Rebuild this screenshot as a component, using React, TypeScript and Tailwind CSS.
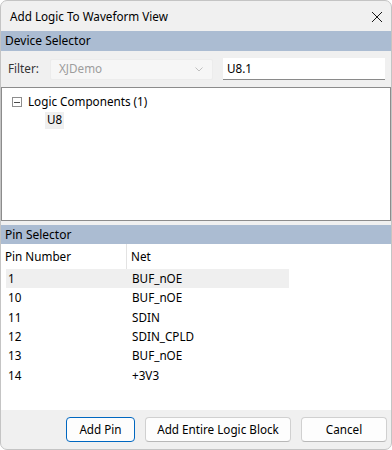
import React from 'react';

const font = { fontFamily: '"Segoe UI", "Noto Sans", "Liberation Sans", sans-serif' };

const pins = [
    { pin: '1', net: 'BUF_nOE' },
    { pin: '10', net: 'BUF_nOE' },
    { pin: '11', net: 'SDIN' },
    { pin: '12', net: 'SDIN_CPLD' },
    { pin: '13', net: 'BUF_nOE' },
    { pin: '14', net: '+3V3' },
];

function Band({ label, h }: { label: string; h: string }) {
    return (
        <div className={`${h} bg-[#abbcd2] flex items-center pl-[4px] text-[12px] text-black leading-none`}>
            {label}
        </div>
    );
}

export default function App() {
    return (
        <div className="w-[392px] h-[450px] bg-white">
            <div
                className="w-[392px] h-[450px] rounded-[7px] border border-[#c4c4c4] bg-[#f0f0f0] overflow-hidden flex flex-col text-[11.7px] text-black"
                style={font}
            >
                {/* title bar */}
                <div className="h-[30px] flex items-center justify-between pl-[9px] pr-[7px] pt-[2px] shrink-0">
                    <span className="leading-none">Add Logic To Waveform View</span>
                    <svg width="12" height="12" viewBox="0 0 12 12" className="mr-[1px]">
                        <path d="M1 1 L11 11 M11 1 L1 11" stroke="#1a1a1a" strokeWidth="1" />
                    </svg>
                </div>

                <Band label="Device Selector" h="h-[20px]" />

                {/* filter row */}
                <div className="h-[36px] flex items-center shrink-0">
                    <span className="ml-[7px] w-[42px] text-[#333]">Filter:</span>
                    <div className="w-[163px] h-[21px] bg-[#f6f6f6] border border-[#ececec] rounded-[2px] flex items-center justify-between pl-[8px] pr-[9px] text-[#9d9d9d]">
                        <span>XJDemo</span>
                        <svg width="8" height="5" viewBox="0 0 8 5">
                            <path d="M0.5 0.5 L4 4 L7.5 0.5" stroke="#c0c0c0" fill="none" strokeWidth="1" />
                        </svg>
                    </div>
                    <div className="ml-[10px] w-[162px] h-[22px] bg-white border-b border-[#8a8a8a] flex items-center pl-[4px]">
                        U8.1
                    </div>
                </div>

                {/* tree view */}
                <div className="h-[134px] bg-white border border-[#8c8c8c] shrink-0 pt-[5px]">
                    <div className="flex items-center h-[18px] pl-[10px]">
                        <span className="w-[10px] h-[10px] border border-[#8e8e8e] flex items-center justify-center">
                            <span className="w-[6px] h-[1px] bg-[#4a4a4a]" />
                        </span>
                        <span className="ml-[6px]">Logic Components (1)</span>
                    </div>
                    <div className="flex items-center h-[18px] pl-[43px]">
                        <span className="bg-[#efefef] px-[2px] h-[17px] flex items-center">U8</span>
                    </div>
                </div>

                <div className="h-[4px] shrink-0" />

                <Band label="Pin Selector" h="h-[19px]" />

                {/* pin table */}
                <div className="flex-1 bg-white flex flex-col">
                    <div className="h-[25px] flex items-stretch shrink-0">
                        <div className="w-[126px] border-r border-[#e3e3e3] flex items-center pl-[4px]">Pin Number</div>
                        <div className="flex items-center pl-[4px]">Net</div>
                    </div>
                    <div className="flex flex-col pl-[5px]">
                        {pins.map((p, i) => (
                            <div
                                key={i}
                                className={`w-[283px] h-[19.4px] flex items-center ${i === 0 ? 'bg-[#efefef]' : ''}`}
                            >
                                <span className="w-[126px] pl-[2px]">{p.pin}</span>
                                <span>{p.net}</span>
                            </div>
                        ))}
                    </div>
                </div>

                {/* footer */}
                <div className="h-[39px] shrink-0 flex items-start justify-end gap-[10px] pr-[4px] pt-[7px]">
                    <button className="w-[69px] h-[25px] bg-[#fdfdfd] border border-[#0067c0] rounded-[4px]">
                        Add Pin
                    </button>
                    <button className="w-[146px] h-[25px] bg-[#fdfdfd] border border-[#d0d0d0] border-b-[#b8b8b8] rounded-[4px]">
                        Add Entire Logic Block
                    </button>
                    <button className="w-[86px] h-[25px] bg-[#fdfdfd] border border-[#d0d0d0] border-b-[#b8b8b8] rounded-[4px]">
                        Cancel
                    </button>
                </div>
            </div>
        </div>
    );
}
